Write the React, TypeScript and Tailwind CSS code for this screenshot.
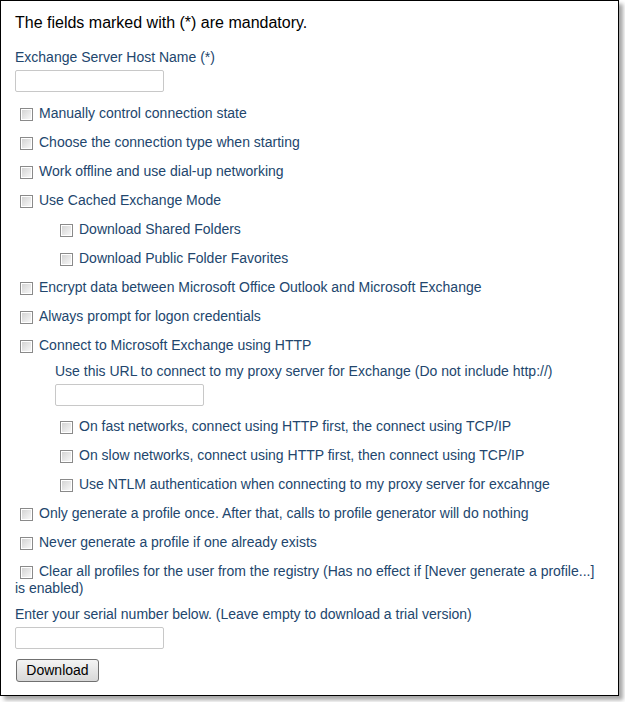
const font = { fontFamily: '"Liberation Sans", Arial, sans-serif' };

function Box() {
  return (
    <span className="relative inline-block h-[13px] w-[13px] shrink-0 border border-[#8a8a8a] bg-white align-[-2px]">
      <span className="absolute inset-[1px] bg-gradient-to-br from-[#d4d4d4] to-[#f7f7f7]" />
    </span>
  );
}

function Check({ label, indent = false, first = false }: { label: string; indent?: boolean; first?: boolean }) {
  return (
    <div className={`${first ? 'mt-[13px]' : 'mt-[12px]'} leading-[17px] ${indent ? 'pl-[40px]' : ''}`}>
      <span className="ml-[5px] mr-[6px] inline-block align-middle leading-none">
        <Box />
      </span>
      {label}
    </div>
  );
}

function Field({ className = '' }: { className?: string }) {
  return (
    <div
      className={`h-[22px] w-[149px] rounded-[2px] border border-[#c8c8c8] bg-white ${className}`}
    />
  );
}

export default function App() {
  return (
    <div className="min-h-[702px] bg-white" style={font}>
      <div className="w-[619px] border border-black bg-white px-[14px] pb-[13px] pt-[12px] shadow-[4px_4px_4px_rgba(0,0,0,0.35)]">
        <div className="text-[16px] leading-[20px] text-black">
          The fields marked with (*) are mandatory.
        </div>

        <div className="text-[14px] text-[#22466d]">
          <div className="mt-[16px] leading-[17px]">Exchange Server Host Name (*)</div>
          <Field className="mt-[4px]" />

          <Check first label="Manually control connection state" />
          <Check label="Choose the connection type when starting" />
          <Check label="Work offline and use dial-up networking" />
          <Check label="Use Cached Exchange Mode" />
          <Check indent label="Download Shared Folders" />
          <Check indent label="Download Public Folder Favorites" />
          <Check label="Encrypt data between Microsoft Office Outlook and Microsoft Exchange" />
          <Check label="Always prompt for logon credentials" />
          <Check label="Connect to Microsoft Exchange using HTTP" />

          <div className="pl-[40px]">
            <div className="mt-[9px] leading-[17px]">
              Use this URL to connect to my proxy server for Exchange (Do not include http://)
            </div>
            <Field className="mt-[4px]" />
          </div>

          <div className="mt-[1px]">
            <Check indent label="On fast networks, connect using HTTP first, the connect using TCP/IP" />
            <Check indent label="On slow networks, connect using HTTP first, then connect using TCP/IP" />
            <Check indent label="Use NTLM authentication when connecting to my proxy server for excahnge" />
          </div>

          <Check label="Only generate a profile once. After that, calls to profile generator will do nothing" />
          <Check label="Never generate a profile if one already exists" />
          <Check label="Clear all profiles for the user from the registry (Has no effect if [Never generate a profile...] is enabled)" />

          <div className="mt-[9px] leading-[17px]">
            Enter your serial number below. (Leave empty to download a trial version)
          </div>
          <Field className="mt-[4px]" />

          <button className="ml-[1px] mt-[10px] h-[23px] w-[83px] rounded-[3px] border border-[#707070] bg-gradient-to-b from-[#f4f4f4] to-[#d8d8d8] text-[14px] text-black">
            Download
          </button>
        </div>
      </div>
    </div>
  );
}
